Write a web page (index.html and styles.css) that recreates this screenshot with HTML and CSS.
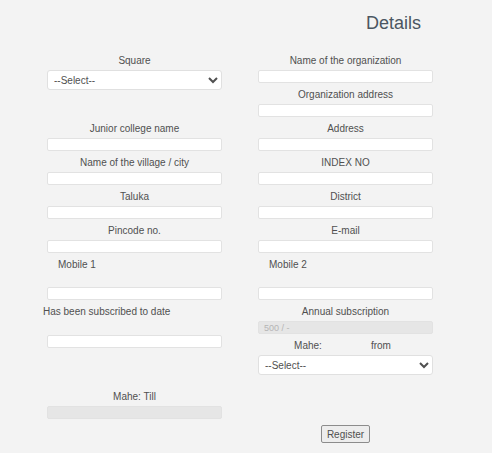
FILE: index.html
```html
<!DOCTYPE html>
<html lang="en">
<head>
    <meta charset="UTF-8">
    <meta name="viewport" content="width=device-width, initial-scale=1.0">
    <title>Details</title>
    <link rel="stylesheet" href="styles.css">
</head>
<body>
    <div class="page">
        <h1 class="title">Details</h1>

        <form class="details-form" onsubmit="return false;">
            <div class="cell">
                <div class="field">
                    <label>Square</label>
                    <select class="select-box">
                        <option>--Select--</option>
                    </select>
                </div>
            </div>
            <div class="cell">
                <div class="field">
                    <label>Name of the organization</label>
                    <input type="text">
                </div>
                <div class="field">
                    <label>Organization address</label>
                    <input type="text">
                </div>
            </div>

            <div class="field">
                <label>Junior college name</label>
                <input type="text">
            </div>
            <div class="field">
                <label>Address</label>
                <input type="text">
            </div>

            <div class="field">
                <label>Name of the village / city</label>
                <input type="text">
            </div>
            <div class="field">
                <label>INDEX NO</label>
                <input type="text">
            </div>

            <div class="field">
                <label>Taluka</label>
                <input type="text">
            </div>
            <div class="field">
                <label>District</label>
                <input type="text">
            </div>

            <div class="field">
                <label>Pincode no.</label>
                <input type="text">
            </div>
            <div class="field">
                <label>E-mail</label>
                <input type="text">
            </div>

            <div class="field">
                <label class="label-left mobile-label">Mobile 1</label>
                <input type="text">
            </div>
            <div class="field">
                <label class="label-left mobile-label">Mobile 2</label>
                <input type="text">
            </div>

            <div class="field">
                <label class="label-left subscribed-label">Has been subscribed to date</label>
                <input type="text">
            </div>
            <div class="cell">
                <div class="field">
                    <label>Annual subscription</label>
                    <input type="text" value="500 / -" disabled>
                </div>
                <div class="field">
                    <label class="mahe-from"><span>Mahe:</span><span>from</span></label>
                    <select class="select-box">
                        <option>--Select--</option>
                    </select>
                </div>
            </div>

            <div class="field till-field">
                <label>Mahe: Till</label>
                <input type="text" disabled>
            </div>
            <div></div>

            <div></div>
            <div class="actions">
                <button type="submit" class="register-button">Register</button>
            </div>
        </form>
    </div>
</body>
</html>
```

FILE: styles.css
```css
body {
    margin: 0;
    background-color: #f3f3f3;
    font-family: "Liberation Sans", Arial, sans-serif;
    color: #505050;
}

.page {
    width: 492px;
    height: 453px;
    overflow: hidden;
}

.title {
    margin: 0;
    padding: 13px 0 0 366px;
    font-size: 18px;
    font-weight: normal;
    line-height: 21px;
    color: #4b5661;
}

.details-form {
    display: grid;
    grid-template-columns: 175px 175px;
    column-gap: 36px;
    row-gap: 5px;
    align-items: start;
    padding: 20px 0 0 47px;
}

.cell {
    display: flex;
    flex-direction: column;
    gap: 5px;
}

.field label {
    display: block;
    height: 13px;
    line-height: 13px;
    margin-bottom: 3px;
    font-size: 10px;
    text-align: center;
    white-space: nowrap;
}

.field .label-left {
    text-align: left;
}

.field .mobile-label {
    padding-left: 11px;
    margin-bottom: 16px;
}

.field .subscribed-label {
    margin-left: -4px;
    margin-bottom: 17px;
}

.field .mahe-from {
    display: flex;
    justify-content: center;
    gap: 49px;
    padding-right: 6px;
}

.till-field {
    margin-top: 10px;
}

.field input[type="text"] {
    display: block;
    box-sizing: border-box;
    width: 175px;
    height: 13px;
    margin: 0;
    padding: 0 5px;
    border: 1px solid #e2e2e2;
    border-radius: 2px;
    background-color: white;
    font-family: inherit;
    font-size: 9px;
}

.field input[type="text"]:disabled {
    background-color: #e6e6e6;
    border-color: #e2e2e2;
    color: #b5b5b5;
}

.select-box {
    display: block;
    box-sizing: border-box;
    width: 175px;
    height: 20px;
    margin: 0;
    padding: 0 2px;
    border: 1px solid #e0e0e0;
    border-radius: 3px;
    background-color: white;
    font-family: inherit;
    font-size: 10px;
    color: #505050;
}

.actions {
    display: flex;
    justify-content: center;
    margin-top: 1px;
}

.register-button {
    height: 18px;
    padding: 0 5px;
    border: 1px solid #8c8c8c;
    border-radius: 2px;
    background-color: #ededed;
    font-family: inherit;
    font-size: 10px;
    color: #505050;
    cursor: pointer;
}

.register-button:hover {
    background-color: #e2e2e2;
}
```
